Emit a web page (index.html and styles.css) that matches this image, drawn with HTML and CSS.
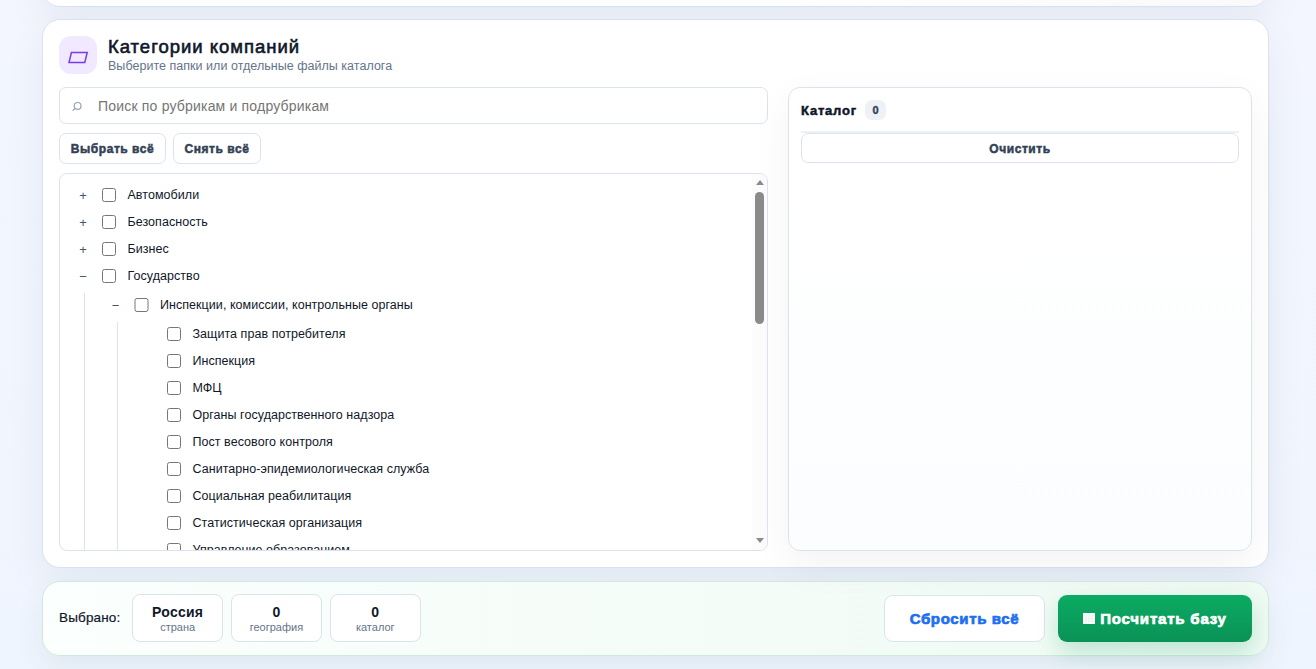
FILE: index.html
```html
<!DOCTYPE html>
<html lang="ru">
<head>
    <meta charset="UTF-8">
    <meta name="viewport" content="width=device-width, initial-scale=1.0">
    <title>Категории компаний</title>
    <link rel="stylesheet" href="styles.css">
</head>
<body>
    <div class="page">
        <section class="card card-prev"></section>

        <section class="card">
            <div class="card-head">
                <div class="card-icon">
                    <svg width="22" height="16" viewBox="0 0 22 16" fill="none" stroke="#7c3aed" stroke-width="1.5">
                        <path d="M4.4 3.5H20.2L17.8 13.5H2Z"/>
                    </svg>
                </div>
                <div class="card-title">
                    <h2>Категории компаний</h2>
                    <p>Выберите папки или отдельные файлы каталога</p>
                </div>
            </div>
            <div class="grid">
                <div class="left">
                    <label class="search">
                        <svg width="10" height="10" viewBox="0 0 10 10" fill="none" stroke="#94a3b8" stroke-width="1.2">
                            <circle cx="5.6" cy="4.9" r="3.4"/>
                            <path d="M3.2 7.3L0.6 9.6"/>
                        </svg>
                        <input type="text" placeholder="Поиск по рубрикам и подрубрикам">
                    </label>
                    <div class="actions">
                        <button class="btn btn-all"><span>Выбрать всё</span></button>
                        <button class="btn btn-none"><span>Снять всё</span></button>
                    </div>
                    <div class="tree-box">
                        <div class="tree">
                            <div class="row"><span class="toggle">+</span><input type="checkbox"><span>Автомобили</span></div>
                            <div class="row"><span class="toggle">+</span><input type="checkbox"><span>Безопасность</span></div>
                            <div class="row"><span class="toggle">+</span><input type="checkbox"><span>Бизнес</span></div>
                            <div class="row"><span class="toggle">−</span><input type="checkbox"><span>Государство</span></div>
                            <div class="children">
                                <div class="row"><span class="toggle">−</span><input type="checkbox"><span>Инспекции, комиссии, контрольные органы</span></div>
                                <div class="children">
                                    <div class="row"><span class="toggle"></span><input type="checkbox"><span>Защита прав потребителя</span></div>
                                    <div class="row"><span class="toggle"></span><input type="checkbox"><span>Инспекция</span></div>
                                    <div class="row"><span class="toggle"></span><input type="checkbox"><span>МФЦ</span></div>
                                    <div class="row"><span class="toggle"></span><input type="checkbox"><span>Органы государственного надзора</span></div>
                                    <div class="row"><span class="toggle"></span><input type="checkbox"><span>Пост весового контроля</span></div>
                                    <div class="row"><span class="toggle"></span><input type="checkbox"><span>Санитарно-эпидемиологическая служба</span></div>
                                    <div class="row"><span class="toggle"></span><input type="checkbox"><span>Социальная реабилитация</span></div>
                                    <div class="row"><span class="toggle"></span><input type="checkbox"><span>Статистическая организация</span></div>
                                    <div class="row"><span class="toggle"></span><input type="checkbox"><span>Управление образованием</span></div>
                                </div>
                            </div>
                        </div>
                        <div class="scrollbar">
                            <span class="arrow-up"></span>
                            <span class="thumb"></span>
                            <span class="arrow-down"></span>
                        </div>
                    </div>
                </div>
                <aside class="side">
                    <div class="side-head">
                        <strong>Каталог</strong>
                        <span class="count">0</span>
                    </div>
                    <button class="btn btn-clear"><span>Очистить</span></button>
                </aside>
            </div>
        </section>

        <section class="card summary">
            <span class="summary-label">Выбрано:</span>
            <div class="stats">
                <div class="stat"><b class="country">Россия</b><small>страна</small></div>
                <div class="stat"><b>0</b><small>география</small></div>
                <div class="stat"><b>0</b><small>каталог</small></div>
            </div>
            <button class="btn-reset"><span>Сбросить всё</span></button>
            <button class="btn-count">
                <svg width="12" height="11" viewBox="0 0 12 11">
                    <path fill="#fff" d="M0 0H12V11H0Z"/>
                    <path stroke="#b5e2ca" stroke-width=".3" d="M3 1V10M6 1V10M9 1V10M1 3H11M1 5.5H11M1 8H11"/>
                </svg>
                <span>Посчитать базу</span>
            </button>
        </section>
    </div>
</body>
</html>
```
FILE: styles.css
```css
* {
    box-sizing: border-box;
}
body {
    margin: 0;
    height: 669px;
    overflow: hidden;
    font-family: "Liberation Sans", Arial, sans-serif;
    color: #0f172a;
    background: linear-gradient(#f3f6ff, #eff5fe);
}
button, input {
    font-family: inherit;
}
.page {
    width: 1227px;
    margin-left: 42px;
}
.card {
    padding: 16px;
    border: 1px solid #d9e2ef;
    border-radius: 18px;
    background: #fff;
    box-shadow: 0 14px 40px rgba(15, 35, 52, 0.06);
}
.card-prev {
    height: 60px;
    margin-top: -53px;
    margin-bottom: 12px;
    background: linear-gradient(90deg, #fff 60%, #fafafc);
}
.card-head {
    display: flex;
    align-items: center;
    gap: 11px;
    height: 38px;
    margin-bottom: 13px;
}
.card-icon {
    display: flex;
    align-items: center;
    justify-content: center;
    width: 38px;
    height: 38px;
    padding-top: 4px;
    border-radius: 12px;
    background: #f0e9ff;
}
.card-title {
    padding-top: 2px;
}
.card-head h2 {
    margin: 0;
    font-size: 18.5px;
    font-weight: 400;
    line-height: 21px;
    letter-spacing: 0.98px;
    -webkit-text-stroke: 0.6px #0f172a;
}
.card-head p {
    margin: 0;
    font-size: 12.5px;
    line-height: 19px;
    color: #64748b;
    letter-spacing: 0.03px;
}
.grid {
    display: grid;
    grid-template-columns: 709px 1fr;
    gap: 20px;
    height: 464px;
}
.left {
    display: flex;
    flex-direction: column;
    gap: 9px;
    min-height: 0;
}
.search {
    display: flex;
    align-items: center;
    gap: 16px;
    height: 37px;
    padding: 0 12px;
    border: 1px solid #dbe3ef;
    border-radius: 7px;
    background: #fff;
}
.search input {
    flex: 1;
    padding: 0;
    border: none;
    outline: none;
    font-size: 14px;
    letter-spacing: 0.19px;
    background: none;
}
.search input::placeholder {
    color: #757575;
}
.actions {
    display: flex;
    gap: 7px;
}
.btn {
    height: 31px;
    padding: 0;
    border: 1px solid #dbe3ef;
    border-radius: 7px;
    font-size: 12px;
    font-weight: 700;
    letter-spacing: 0.55px;
    color: #334155;
    background: #fff;
    -webkit-text-stroke: 0.5px #334155;
}
.btn-all {
    width: 107px;
}
.btn-none {
    width: 88px;
}
.tree-box {
    display: flex;
    flex: 1;
    min-height: 0;
    border: 1px solid #dbe3ef;
    border-radius: 8px;
    overflow: hidden;
}
.tree {
    flex: 1;
    padding: 9px 8px;
    overflow: hidden;
}
.row {
    display: flex;
    align-items: center;
    height: 24px;
    margin-bottom: 3px;
    font-size: 12.5px;
    letter-spacing: 0.05px;
    white-space: nowrap;
}
.row input {
    width: 14.5px;
    height: 14.5px;
    margin: 0 11.3px 0 3.7px;
}
.toggle {
    width: 30px;
    text-align: center;
    font-size: 13px;
    color: #475569;
}
.children {
    margin: 5px 0 0 16px;
    padding-left: 15.5px;
    border-left: 1px solid #dbe3ef;
}
.scrollbar {
    display: flex;
    flex-direction: column;
    align-items: center;
    width: 15px;
    padding: 6px 0 7px;
    background: #fcfcfc;
}
.arrow-up, .arrow-down {
    border-left: 4.5px solid transparent;
    border-right: 4.5px solid transparent;
}
.arrow-up {
    border-bottom: 5px solid #8b8b8b;
}
.arrow-down {
    margin-top: auto;
    border-top: 5px solid #8b8b8b;
}
.thumb {
    width: 9px;
    height: 132px;
    margin-top: 7px;
    border-radius: 5px;
    background: #8b8b8b;
}
.side {
    padding: 12px;
    border: 1px solid #dbe3ef;
    border-radius: 12px;
    background: linear-gradient(#fff 20%, #fbfdff);
    box-shadow: 0 14px 40px rgba(15, 23, 42, 0.05);
}
.side-head {
    display: flex;
    align-items: center;
    gap: 8px;
    height: 33px;
    padding-bottom: 11px;
    border-bottom: 2px solid #edf2f7;
}
.side-head strong {
    font-size: 13px;
    letter-spacing: 0.8px;
    -webkit-text-stroke: 0.5px #0f172a;
}
.count {
    width: 21px;
    border-radius: 7px;
    font-size: 11px;
    font-weight: 700;
    line-height: 20px;
    text-align: center;
    color: #334155;
    background: #eef2f7;
    -webkit-text-stroke: 0.4px #334155;
}
.btn-clear {
    width: 100%;
    height: 30px;
    padding-top: 1px;
}
.summary {
    display: flex;
    align-items: center;
    height: 75px;
    margin-top: 13px;
    border-color: #cdebd9;
    background: linear-gradient(90deg, #fbfffd, #eefaf3);
    box-shadow: 0 12px 30px rgba(15, 70, 52, 0.07);
}
.summary-label {
    width: 73px;
    padding-bottom: 2px;
    font-size: 13.5px;
    letter-spacing: 0.15px;
    -webkit-text-stroke: 0.2px #0f172a;
}
.stats {
    display: flex;
    gap: 7.5px;
    margin-bottom: 1px;
}
.stat {
    display: flex;
    flex-direction: column;
    align-items: center;
    justify-content: center;
    width: 91.3px;
    height: 48px;
    padding-top: 1px;
    border: 1px solid #dbe3ef;
    border-radius: 8px;
    background: #fff;
}
.stat b {
    font-size: 14px;
    line-height: 16px;
}
.stat .country {
    letter-spacing: 0.25px;
}
.stat small {
    font-size: 11px;
    line-height: 14px;
    color: #64748b;
}
.btn-reset, .btn-count {
    height: 47px;
    padding: 0;
    border-radius: 9px;
    font-size: 15px;
    font-weight: 700;
    letter-spacing: 0.65px;
}
.btn-reset {
    width: 161px;
    margin-left: auto;
    border: 1px solid #dbe3ef;
    color: #1d6ff2;
    background: #fff;
    -webkit-text-stroke: 0.7px #1d6ff2;
}
.btn-count {
    display: flex;
    align-items: center;
    justify-content: center;
    gap: 5px;
    width: 194px;
    margin-left: 13px;
    border: none;
    letter-spacing: 0.8px;
    color: #fff;
    background: linear-gradient(#0bab63, #0a9256);
    box-shadow: 0 10px 22px rgba(10, 154, 90, 0.22);
    -webkit-text-stroke: 0.7px #fff;
}
```
